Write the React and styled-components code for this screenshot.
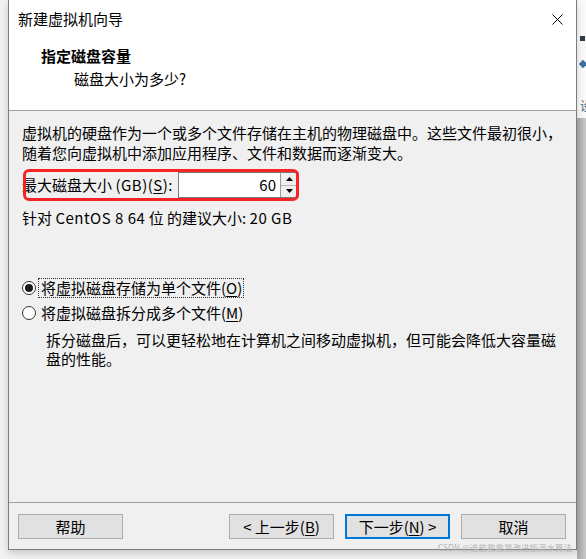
import React from 'react';
import styled, { createGlobalStyle } from 'styled-components';

const Global = createGlobalStyle`
  html, body { margin: 0; padding: 0; background: #f2f2f2; }
  body { font-family: "Noto Sans CJK SC", "Noto Sans", sans-serif; color: #000; }
  * { box-sizing: border-box; }
`;

const Page = styled.div`
  width: 586px;
  height: 559px;
  display: flex;
  overflow: hidden;
  background: #f2f2f2;
`;

const LeftGap = styled.div`
  width: 8px;
  flex: none;
`;

const Window = styled.div`
  position: relative;
  width: 569px;
  height: 550px;
  flex: none;
  border: 1px solid #7d7d7d;
  border-top: none;
  display: flex;
  flex-direction: column;
  background: #f0f0f0;
  box-shadow: 0 3px 8px rgba(0, 0, 0, 0.18);
  font-size: 15px;
`;

const RightStrip = styled.div`
  flex: 1;
  display: flex;
  flex-direction: column;
  overflow: hidden;
`;

const RightTop = styled.div`
  height: 118px;
  background: #fafafa;
  display: flex;
  flex-direction: column;
  align-items: flex-start;
  padding: 36px 0 0 3px;
  font-size: 12px;
  line-height: 14px;
  color: #3a5a80;
`;

const RightBottom = styled.div`
  flex: 1;
  background: linear-gradient(to right, #a9a9a9, #c9c9c9);
`;

const Mark = styled.div`
  width: ${p => p.$w}px;
  height: ${p => p.$h}px;
  margin-top: ${p => p.$mt || 0}px;
  background: ${p => p.$c};
  transform: ${p => (p.$rot ? 'rotate(45deg)' : 'none')};
`;

const EdgeGlyph = styled.span`
  margin-top: 32px;
  width: 8px;
  overflow: hidden;
  white-space: nowrap;
`;

const Header = styled.div`
  background: #fff;
  height: 111px;
  border-bottom: 1px solid #a0a0a0;
  display: flex;
  flex-direction: column;
  flex: none;
`;

const TitleBar = styled.div`
  height: 38px;
  display: flex;
  align-items: center;
  justify-content: space-between;
  padding: 0 13px 0 9px;
  font-size: 15px;
  line-height: 20px;
`;

const Heading = styled.div`
  margin-top: 7px;
  padding-left: 32px;
  font-weight: 700;
  line-height: 22px;
`;

const SubHeading = styled.div`
  padding-left: 65px;
  line-height: 24px;
`;

const Body = styled.div`
  flex: 1;
  padding: 12px 0 0 13px;
  display: flex;
  flex-direction: column;
`;

const Para = styled.div`
  line-height: 20px;
  white-space: nowrap;
`;

const Row = styled.div`
  position: relative;
  margin-top: 9px;
  height: 26px;
  display: flex;
  align-items: center;
`;

const Label = styled.div`
  width: 156px;
  flex: none;
  white-space: nowrap;
  line-height: 20px;
`;

const Latin = styled.span`
  letter-spacing: 0.5px;
`;

const SpinBox = styled.div`
  width: 121px;
  height: 26px;
  display: flex;
  border: 1px solid #7a7a7a;
  border-right-color: #cfcfcf;
  background: #fff;
`;

const Field = styled.div`
  flex: 1;
  text-align: right;
  padding-right: 4px;
  line-height: 24px;
`;

const SpinCol = styled.div`
  width: 18px;
  display: flex;
  flex-direction: column;
  border-left: 1px solid #9a9a9a;
`;

const SpinBtn = styled.div`
  flex: 1;
  background: #f0f0f0;
  display: flex;
  align-items: center;
  justify-content: center;
  border-bottom: ${p => (p.$top ? '1px solid #b8b8b8' : 'none')};
`;

const Highlight = styled.div`
  position: absolute;
  left: 1px;
  top: -3px;
  width: 276px;
  height: 32px;
  border: 3px solid #f52525;
  border-radius: 6px;
  pointer-events: none;
`;

const Recommend = styled.div`
  margin-top: 10px;
  line-height: 20px;
`;

const RadioRow = styled.div`
  display: flex;
  align-items: center;
  height: 20px;
  margin-top: ${p => p.$mt}px;
`;

const RadioCircle = styled.div`
  width: 14px;
  height: 14px;
  border-radius: 50%;
  border: 1px solid #333;
  background: #fff;
  display: flex;
  align-items: center;
  justify-content: center;
  flex: none;
`;

const RadioDot = styled.div`
  width: 8px;
  height: 8px;
  border-radius: 50%;
  background: #1a1a1a;
`;

const RadioLabel = styled.div`
  margin-left: 2px;
  padding: 0 1px 0 2px;
  line-height: 18px;
  border: 1px dotted ${p => (p.$focus ? '#333' : 'transparent')};
  white-space: nowrap;
`;

const Desc = styled.div`
  margin-top: 7px;
  padding-left: 24px;
  line-height: 19px;
  white-space: nowrap;
`;

const U = styled.span`
  text-decoration: underline;
  text-underline-offset: 2px;
`;

const Footer = styled.div`
  flex: none;
  border-top: 1px solid #a0a0a0;
  padding: 11px 10px 10px 9px;
  display: flex;
  align-items: center;
`;

const Button = styled.div`
  width: 105px;
  height: 25px;
  flex: none;
  background: #e1e1e1;
  border: ${p => (p.$default ? '2px solid #0078d7' : '1px solid #adadad')};
  display: flex;
  align-items: center;
  justify-content: center;
  font-size: 15px;
  margin-left: ${p => p.$ml || 0}px;
  white-space: nowrap;
`;

const Spacer = styled.div`
  flex: 1;
`;

const Watermark = styled.div`
  position: absolute;
  right: 4px;
  bottom: -3px;
  font-size: 8.5px;
  line-height: 10px;
  color: #b5b5b5;
  white-space: nowrap;
`;

const CloseIcon = () => (
  <svg width="11" height="11" viewBox="0 0 11 11">
    <path d="M0.5 0.5 L10.5 10.5 M10.5 0.5 L0.5 10.5" stroke="#000" strokeWidth="1" fill="none" />
  </svg>
);

const Arrow = ({ up }) => (
  <svg width="7" height="4" viewBox="0 0 7 4">
    <path d={up ? 'M0 4 L3.5 0 L7 4 Z' : 'M0 0 L3.5 4 L7 0 Z'} fill="#000" />
  </svg>
);

export default function App() {
  return (
    <>
      <Global />
      <Page>
        <LeftGap />
        <Window>
          <Header>
            <TitleBar>
              <span>新建虚拟机向导</span>
              <CloseIcon />
            </TitleBar>
            <Heading>指定磁盘容量</Heading>
            <SubHeading>磁盘大小为多少?</SubHeading>
          </Header>
          <Body>
            <Para>
              虚拟机的硬盘作为一个或多个文件存储在主机的物理磁盘中。这些文件最初很小，
              <br />
              随着您向虚拟机中添加应用程序、文件和数据而逐渐变大。
            </Para>
            <Row>
              <Label>
                最大磁盘大小 <Latin>(GB)(<U>S</U>):</Latin>
              </Label>
              <SpinBox>
                <Field>60</Field>
                <SpinCol>
                  <SpinBtn $top>
                    <Arrow up />
                  </SpinBtn>
                  <SpinBtn>
                    <Arrow />
                  </SpinBtn>
                </SpinCol>
              </SpinBox>
              <Highlight />
            </Row>
            <Recommend>
              针对 <Latin>CentOS 8 64</Latin> 位 的建议大小: <Latin>20 GB</Latin>
            </Recommend>
            <RadioRow $mt={50}>
              <RadioCircle>
                <RadioDot />
              </RadioCircle>
              <RadioLabel $focus>
                将虚拟磁盘存储为单个文件(<U>O</U>)
              </RadioLabel>
            </RadioRow>
            <RadioRow $mt={5}>
              <RadioCircle />
              <RadioLabel>
                将虚拟磁盘拆分成多个文件(<U>M</U>)
              </RadioLabel>
            </RadioRow>
            <Desc>
              拆分磁盘后，可以更轻松地在计算机之间移动虚拟机，但可能会降低大容量磁
              <br />
              盘的性能。
            </Desc>
          </Body>
          <Footer>
            <Button>帮助</Button>
            <Spacer />
            <Button>
              &lt; 上一步(<U>B</U>)
            </Button>
            <Button $default $ml={11}>
              下一步(<U>N</U>) &gt;
            </Button>
            <Button $ml={11}>取消</Button>
          </Footer>
          <Watermark>CSDN @谁能救救我改进版滴水算法</Watermark>
        </Window>
        <RightStrip>
          <RightTop>
            <Mark $w={5} $h={5} $c="#2b3a4a" />
            <Mark $w={6} $h={6} $c="#3d6f9e" $mt={20} $rot />
            <EdgeGlyph>设</EdgeGlyph>
          </RightTop>
          <RightBottom />
        </RightStrip>
      </Page>
    </>
  );
}
